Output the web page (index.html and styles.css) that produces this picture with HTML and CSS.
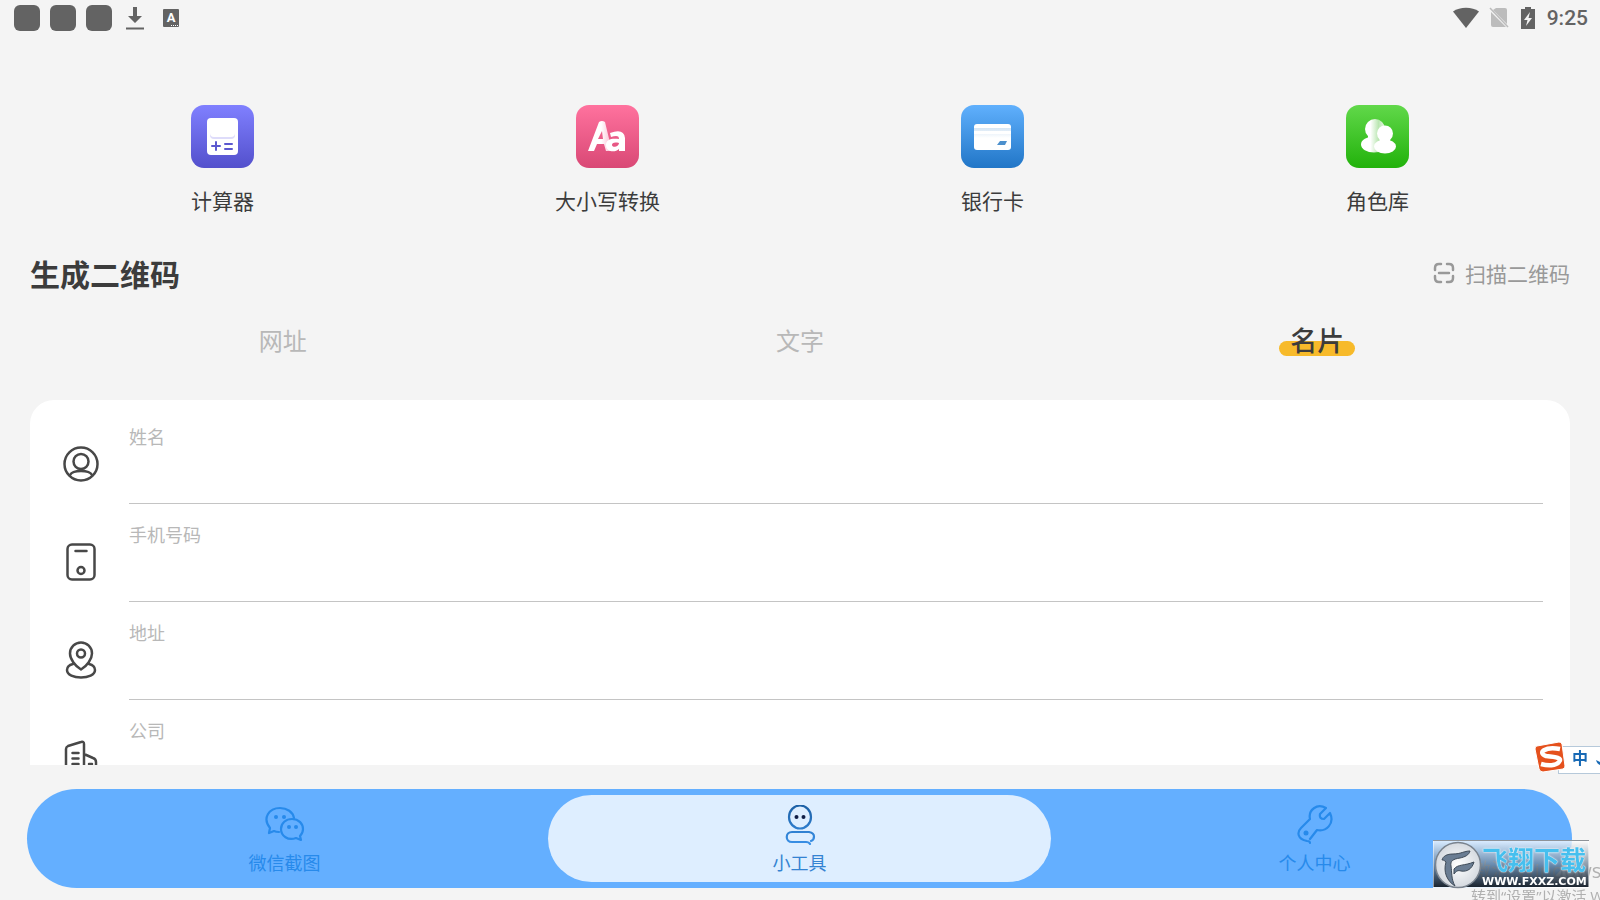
FILE: index.html
```html
<!DOCTYPE html>
<html lang="zh-CN">
<head>
<meta charset="utf-8">
<meta name="viewport" content="width=device-width, initial-scale=1">
<title>生成二维码</title>
<link rel="stylesheet" href="styles.css">
</head>
<body>
<div class="app">
  <header class="status">
    <div class="status-left">
      <span class="notice"></span><span class="notice"></span><span class="notice"></span>
      <svg class="download" width="18" height="24" viewBox="0 0 18 24" fill="#636363"><path d="M7 1h4v9h5l-7 7-7-7h5zM0 21.500h18v2H0z"/></svg>
      <span class="lang">A<i></i></span>
    </div>
    <div class="status-right">
      <svg width="26" height="22" viewBox="0 0 26 22" fill="#636363"><path d="M0 4.500C7-.500 19-.500 26 4.500L13 21z"/></svg>
      <svg width="20" height="22" viewBox="0 0 20 22"><path d="M7 1h9q2 0 2 2v14L4 3zM2 5l15 15H4q-2 0-2-2z" fill="#bcbcbc"/><path d="M1 1l18 19" stroke="#bcbcbc" stroke-width="1.500"/></svg>
      <svg width="14" height="22" viewBox="0 0 14 22"><path d="M4 0h6v2h4v20H0V2h4z" fill="#636363"/><path d="M9 5l-6 8h3.500L5 19l6-8H7.500z" fill="#f4f4f4"/></svg>
      <time>9:25</time>
    </div>
  </header>

  <nav class="tools" aria-label="工具">
    <a href="#calc" class="tool">
      <svg width="63" height="63" viewBox="0 0 63 63"><defs><linearGradient id="gp" x2="0" y2="1"><stop stop-color="#8080ff"/><stop offset="1" stop-color="#5350cc"/></linearGradient></defs><rect width="63" height="63" rx="13" fill="url(#gp)"/><rect x="16" y="13" width="31" height="37" rx="4" fill="#fff"/><rect x="19" y="17" width="25" height="17" rx="4" fill="#dedcfa"/><rect x="19" y="15" width="25" height="17" rx="4" fill="#fff"/><path d="M21 41h8M25 37v8M34 39h7M34 44h7" stroke="#5b58cf" stroke-width="2" stroke-linecap="round"/></svg>
      <span>计算器</span>
    </a>
    <a href="#case" class="tool">
      <svg width="63" height="63" viewBox="0 0 63 63"><defs><linearGradient id="gr" x2="0" y2="1"><stop stop-color="#ff729e"/><stop offset="1" stop-color="#d94875"/></linearGradient><linearGradient id="ga"><stop offset=".55" stop-color="#fff"/><stop offset="1" stop-color="#fbb6ce"/></linearGradient></defs><rect width="63" height="63" rx="13" fill="url(#gr)"/><path d="M12 46L23 17q3-2 6 0l7 29h-6l-2-7h-7l-3 7zM22 34h5l-1-8z" fill="url(#ga)" fill-rule="evenodd"/><path d="M34 28q14-5 15 5v13h-6v-2c-4 4-13 3-13-4 0-6 6-7 13-6 0-4-4-3-8-2zM43 38c-5-1-7 0-7 2 0 3 7 2 7-2z" fill="#fff" fill-rule="evenodd"/></svg>
      <span>大小写转换</span>
    </a>
    <a href="#card" class="tool">
      <svg width="63" height="63" viewBox="0 0 63 63"><defs><linearGradient id="gb" x2="0" y2="1"><stop stop-color="#60b0fd"/><stop offset="1" stop-color="#2176c7"/></linearGradient><linearGradient id="gs" x2="0" y2="1"><stop stop-color="#d5e5f4"/><stop offset="1" stop-color="#fff"/></linearGradient></defs><rect width="63" height="63" rx="13" fill="url(#gb)"/><rect x="13" y="19" width="37" height="26" rx="3" fill="#fff"/><path d="M13 23h37v3H13zM13 29h37v4H13z" fill="url(#gs)"/><path d="M39 36h7l-2 4h-8z" fill="#4c90cd"/></svg>
      <span>银行卡</span>
    </a>
    <a href="#roles" class="tool">
      <svg width="63" height="63" viewBox="0 0 63 63"><defs><linearGradient id="gg" x2="0" y2="1"><stop stop-color="#61d84a"/><stop offset="1" stop-color="#22b20b"/></linearGradient><linearGradient id="gh" gradientUnits="userSpaceOnUse" x1="15" y1="0" x2="42" y2="0"><stop offset=".35" stop-color="#fff"/><stop offset=".65" stop-color="#b9e6b1"/><stop offset="1" stop-color="#fff"/></linearGradient></defs><rect width="63" height="63" rx="13" fill="url(#gg)"/><g fill="url(#gh)"><circle cx="29" cy="24" r="10"/><ellipse cx="28" cy="39.500" rx="13" ry="8"/><path d="M22 25h13v12H22z"/></g><g fill="#fff"><circle cx="39" cy="28.500" r="8"/><path d="M34 33h10v6H34z"/><ellipse cx="39" cy="41.500" rx="11" ry="7"/></g></svg>
      <span>角色库</span>
    </a>
  </nav>

  <div class="section-head">
    <h1>生成二维码</h1>
    <button class="scan" type="button">
      <svg width="22" height="22" viewBox="0 0 22 22" fill="none" stroke="#999" stroke-width="2.500" stroke-linecap="round"><path d="M2 8V6q0-4 4-4h2M14 2h2q4 0 4 4v2M20 14v2q0 4-4 4h-2M8 20H6q-4 0-4-4v-2M6 11h10"/></svg>
      扫描二维码
    </button>
  </div>

  <div class="tabs" role="tablist">
    <button type="button" role="tab">网址</button>
    <button type="button" role="tab">文字</button>
    <button type="button" role="tab" class="active" aria-selected="true"><span>名片</span></button>
  </div>

  <form class="card">
    <div class="row">
      <svg width="38" height="38" viewBox="0 0 38 38"><circle cx="19" cy="19" r="16.500"/><circle cx="19" cy="16.500" r="7.500"/><path d="M8 30q2-4 11-4t11 4"/></svg>
      <div class="field"><label for="name">姓名</label><input id="name" type="text"></div>
    </div>
    <div class="row">
      <svg width="38" height="38" viewBox="0 0 38 38"><rect x="5.500" y="1.500" width="27" height="35" rx="4.500"/><path d="M13.500 8h11"/><circle cx="19" cy="27.500" r="3.500"/></svg>
      <div class="field"><label for="phone">手机号码</label><input id="phone" type="tel"></div>
    </div>
    <div class="row">
      <svg width="38" height="38" viewBox="0 0 38 38"><path d="M19 28.500C13 25 8 18 8 12.500a11 11 0 0 1 22 0C30 18 25 25 19 28.500z"/><circle cx="19" cy="12.500" r="4"/><path d="M11 23c-4 1-6 3-6 6 0 10 28 10 28 0 0-3-2-5-6-6"/></svg>
      <div class="field"><label for="address">地址</label><input id="address" type="text"></div>
    </div>
    <div class="row">
      <svg width="38" height="38" viewBox="0 0 38 38"><path d="M4 35V10q0-2 2-3l13-4q3-1 3 2v30zM22 15l9 4q3 1 3 4v12H22M10.500 14h6M10.500 19.500h6M10.500 25h6M27 25h3"/></svg>
      <div class="field"><label for="company">公司</label><input id="company" type="text"></div>
    </div>
  </form>

  <nav class="bottom-nav" aria-label="主导航">
    <a href="#wechat">
      <svg width="40" height="40" viewBox="0 0 40 40" stroke="#278aeb"><path d="M14 27q-3 0-5-1l-5 2 1-5C-3 13 4 3 15 3c7 0 13 4 14 10"/><path d="M27 14c7 0 11 5 11 10 0 3-1 5-3 7l1 4-5-2c-8 3-15-2-15-9 0-6 5-10 11-10z"/><g fill="#278aeb" stroke="none"><circle cx="11" cy="12" r="2"/><circle cx="19" cy="12" r="2"/><circle cx="24" cy="22" r="2"/><circle cx="31" cy="22" r="2"/></g></svg>
      <span>微信截图</span>
    </a>
    <a href="#tools" class="current" aria-current="page">
      <svg width="40" height="40" viewBox="0 0 40 40"><defs><linearGradient id="gn" gradientUnits="userSpaceOnUse" x1="0" y1="0" x2="0" y2="40"><stop stop-color="#1c5fa4"/><stop offset="1" stop-color="#3a91e8"/></linearGradient></defs><g stroke="url(#gn)"><ellipse cx="20" cy="12" rx="11" ry="11.500"/><path d="M31 36q3-1 3-4.500t-5-4.500H12c-7 0-7 10 0 10h14q3 0 4 2"/></g><g fill="#101d45"><circle cx="16.500" cy="12" r="2"/><circle cx="23.500" cy="12" r="2"/></g></svg>
      <span>小工具</span>
    </a>
    <a href="#me">
      <svg width="40" height="40" viewBox="0 0 40 40" stroke="#278aeb"><path d="M15 38q0-2-3-2C2 34 2 27 6 23l9-9C13 5 22-2 31 3l-6 6q-1 5 4 5l6-6c5 11-4 19-13 17l-7 9"/><circle cx="11" cy="28" r="2.500" fill="#278aeb" stroke="none"/></svg>
      <span>个人中心</span>
    </a>
  </nav>
</div>

<div class="activate"><strong>激活 Windows</strong><span>转到“设置”以激活 W</span></div>
<div class="ime"><svg width="32" height="32" viewBox="0 0 32 32"><path d="M3 5L25 1q2 0 3 2l3 22q0 2-2 3L9 31q-3 0-4-3L1 8q0-3 2-3z" fill="#e5511d" stroke="#fff" stroke-width="1"/><path d="M26 8C11 5 3 12 12 15c10 1 17 2 13 6-3 4-11 4-18 2" fill="none" stroke="#fff" stroke-width="4.500"/></svg><b>中</b><svg width="4" height="8" viewBox="0 0 4 8"><path d="M0 2l4 2v3Q1 6 0 2z" fill="#1769b5"/></svg></div>
<div class="watermark">
  <svg width="48" height="48" viewBox="0 0 48 48"><defs><radialGradient id="gw"><stop stop-color="#fff"/><stop offset="1" stop-color="#d5dae0"/></radialGradient></defs><circle cx="24" cy="24" r="22.500" fill="url(#gw)" stroke="#7a838e" stroke-width="1.500"/><path d="M8 19c1-4 5-6 11-6 8 0 11-3 17-3-1 4-5 6-10 7-7 1-10 3-9 8 1 6 0 13 4 20-8-5-12-14-9-24-2-2-3-2-4-2zM20 28c4-5 10-3 20-7-2 7-7 10-13 9-3-1-5 0-7 3z" fill="#6a7d93" stroke="#3f4b58"/></svg>
  <div><b>飞翔下载</b><small>WWW.FXXZ.COM</small></div>
</div>
</body>
</html>
```
FILE: styles.css
```css
* { box-sizing: border-box; }
body {
  margin: 0;
  background: #f4f4f4;
  color: #3c3c3c;
  font-family: "Noto Sans CJK SC", sans-serif;
  overflow: hidden;
}
a { color: inherit; text-decoration: none; }
button { border: 0; padding: 0; background: none; font: inherit; color: inherit; cursor: pointer; }
svg { display: block; flex: none; }

.app { height: 100vh; display: flex; flex-direction: column; }

.status {
  display: flex;
  justify-content: space-between;
  height: 36px;
  padding: 0 12px 0 14px;
  flex: none;
}
.status-left, .status-right { display: flex; align-items: center; }
.status-left { gap: 10px; }
.notice { width: 26px; height: 26px; border-radius: 6px; background: #636363; }
.download { margin: 0 9px 0 4px; }
.lang {
  position: relative;
  width: 16px;
  height: 18px;
  border-radius: 1px;
  background: #636363;
  color: #fff;
  font: bold 13px/18px Roboto, sans-serif;
  text-align: center;
}
.lang i { position: absolute; right: 1px; bottom: 1px; width: 7px; border-bottom: 1px dotted #fff; }
.status-right { gap: 8px; }
.status-right svg + svg { margin-left: 2px; }
.status-right svg:nth-of-type(3) { margin-left: 4px; }
.status-right time { margin-left: 4px; color: #636363; font: 500 21px/36px Roboto, sans-serif; }

.tools {
  display: grid;
  grid-template-columns: repeat(4, 1fr);
  padding: 69px 30px 0;
  flex: none;
}
.tool { display: flex; flex-direction: column; align-items: center; gap: 16px; font-size: 21px; line-height: 32px; }

.section-head {
  display: flex;
  align-items: center;
  justify-content: space-between;
  margin-top: 35px;
  padding: 0 30px;
  flex: none;
}
.section-head h1 { margin: 0; font-size: 30px; line-height: 44px; font-weight: 700; }
.scan { display: flex; align-items: center; gap: 10px; color: #999; font-size: 21px; line-height: 44px; }

.tabs { display: grid; grid-template-columns: repeat(3, 1fr); padding: 0 24px; height: 105px; flex: none; }
.tabs button { height: 88px; color: #b8b8b8; font-size: 24px; }
.tabs .active { color: #3c3c3c; font-size: 27px; font-weight: 500; }
.tabs .active span { position: relative; z-index: 0; display: inline-block; padding: 0 11px; line-height: 32px; }
.tabs .active span::before {
  content: "";
  position: absolute;
  z-index: -1;
  right: 0;
  bottom: 0;
  left: 0;
  height: 15px;
  border-radius: 8px;
  background: #f7ba2a;
}

.card {
  flex: 1;
  min-height: 0;
  margin: 0 30px 24px;
  padding: 6px 27px 0 32px;
  background: #fff;
  border-radius: 24px 24px 0 0;
  overflow: hidden;
}
.row { display: flex; align-items: center; gap: 29px; height: 98px; }
.row svg { margin-top: 18px; fill: none; stroke: #484848; stroke-width: 2.500; stroke-linecap: round; stroke-linejoin: round; }
.field { flex: 1; height: 98px; display: flex; flex-direction: column; border-bottom: 1px solid #c4c4c4; }
.field label { padding-top: 17px; color: #b8b8b8; font-size: 18px; line-height: 26px; }
.field input { width: 100%; flex: 1; min-height: 0; border: 0; padding: 0; background: none; outline: 0; font: inherit; font-size: 20px; }

.bottom-nav {
  display: grid;
  grid-template-columns: repeat(3, 1fr);
  gap: 12px;
  flex: none;
  height: 99px;
  margin: 0 28px 12px 27px;
  padding: 6px;
  border-radius: 50px;
  background: #64afff;
}
.bottom-nav a {
  display: flex;
  flex-direction: column;
  align-items: center;
  padding-top: 10px;
  gap: 4px;
  border-radius: 44px;
  color: #278aeb;
  font-size: 18px;
  line-height: 26px;
}
.bottom-nav svg { fill: none; stroke-width: 2.200; stroke-linecap: round; stroke-linejoin: round; }
.bottom-nav .current { background: #deeeff; color: #3483d2; }

.activate {
  position: fixed;
  top: 858px;
  left: calc(100% - 129px);
  display: flex;
  flex-direction: column;
  white-space: nowrap;
  color: #b0b0b0;
  font-family: "Open Sans", "Noto Sans CJK SC", sans-serif;
  font-size: 15px;
  line-height: 24px;
}
.activate strong { font-weight: 400; font-size: 20px; line-height: 26px; }
.ime { position: fixed; top: 741px; right: 0; display: flex; align-items: center; gap: 6px; }
.ime::before { content: ""; position: absolute; top: 5px; right: 0; left: 24px; height: 26px; border: 1px solid #b6c9da; border-right: 0; background: #fff; z-index: -1; }
.ime b { color: #1769b5; font-size: 16px; line-height: 32px; font-weight: 700; }
.ime svg:last-child { margin-top: 10px; margin-left: 2px; }

.watermark {
  position: fixed;
  top: 840px;
  right: 11px;
  width: 156px;
  height: 48px;
  display: flex;
  border: 1px solid rgba(255, 255, 255, .5);
  background: linear-gradient(rgba(255, 255, 255, .75), rgba(110, 130, 150, .75) 50%, #1c2530);
}
.watermark div { display: flex; flex-direction: column; }
.watermark b { color: #46bfee; font-size: 26px; line-height: 36px; font-weight: 700; text-shadow: 0 0 2px #fff, 0 0 1px #fff; white-space: nowrap; }
.watermark small { color: #fff; font: bold 11px/10px "DejaVu Sans", sans-serif; }
```
